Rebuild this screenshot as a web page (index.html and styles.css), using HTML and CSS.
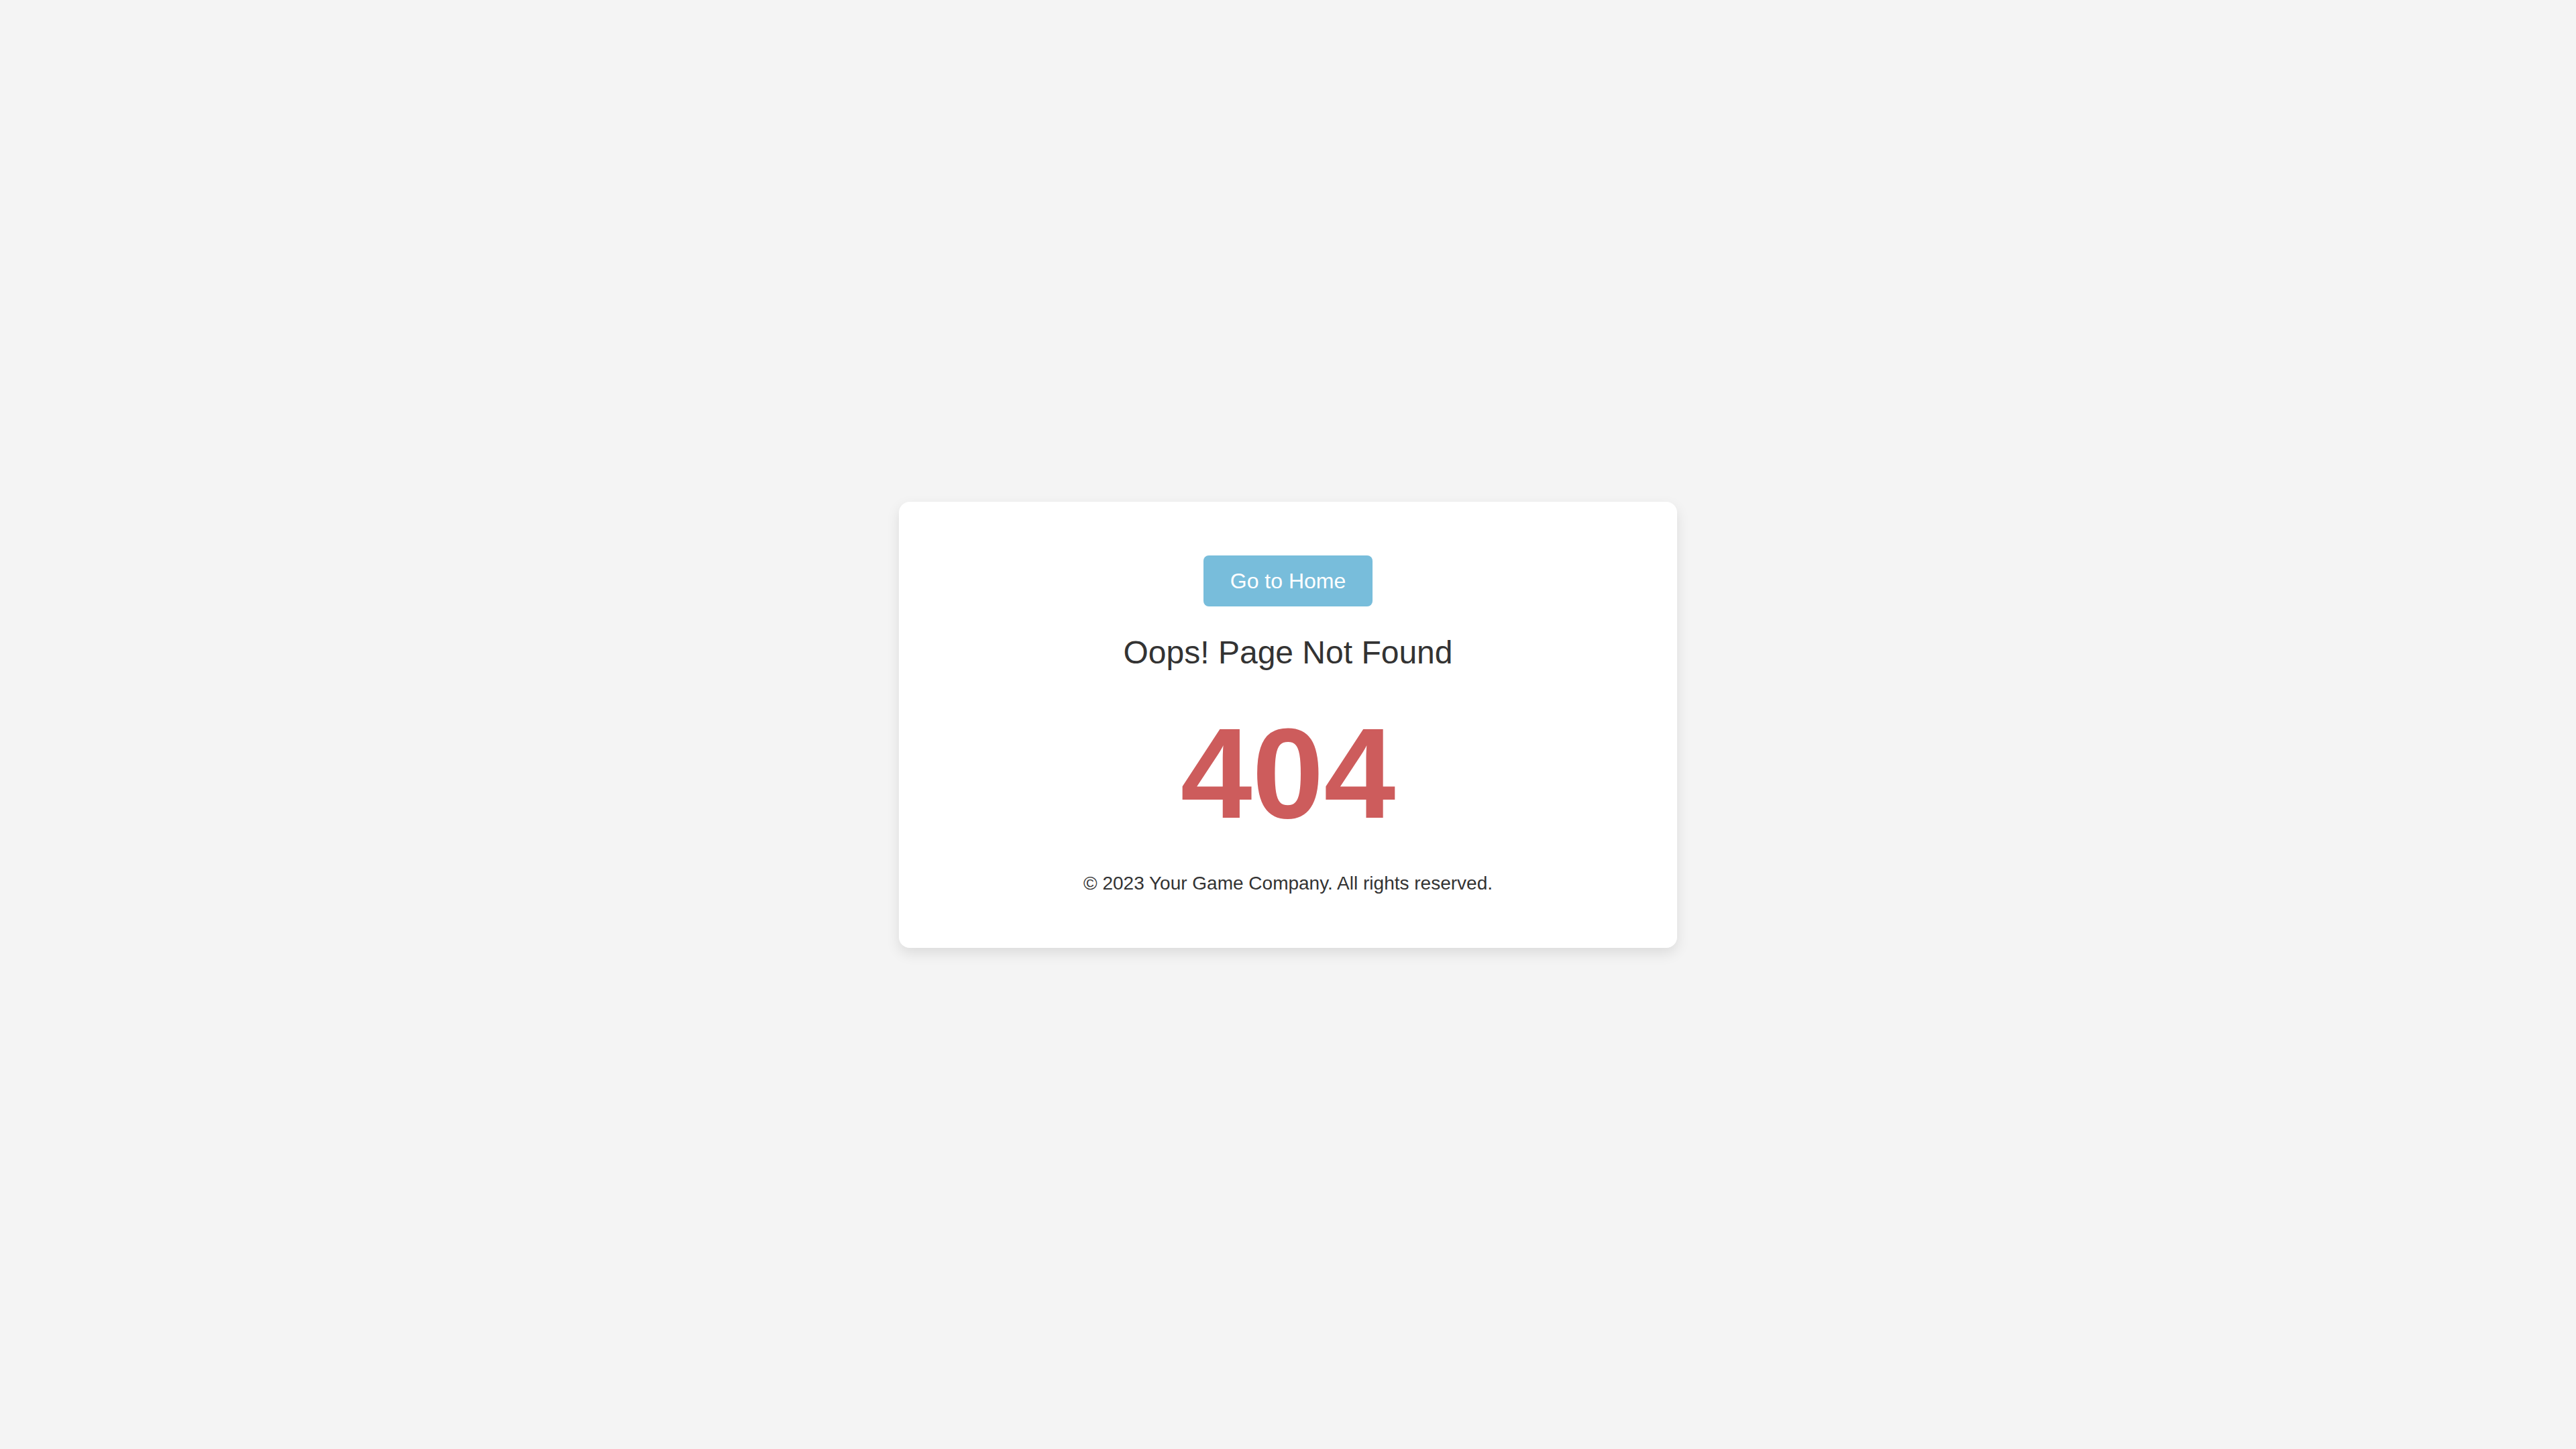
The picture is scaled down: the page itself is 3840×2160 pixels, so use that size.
FILE: index.html
```html
<!DOCTYPE html>
<html lang="en">
<head>
<meta charset="utf-8">
<title>404 - Page Not Found</title>
<link rel="stylesheet" href="styles.css">
</head>
<body>
  <main class="card">
    <a class="home-btn" href="#">Go to Home</a>
    <h1 class="title">Oops! Page Not Found</h1>
    <div class="code">404</div>
    <p class="footer">© 2023 Your Game Company. All rights reserved.</p>
  </main>
</body>
</html>
```

FILE: styles.css
```css
html, body {
  margin: 0;
  padding: 0;
}

body {
  background: #f4f4f4;
  font-family: "Liberation Sans", Arial, sans-serif;
  color: #333333;
  height: 100vh;
  display: flex;
  align-items: center;
  justify-content: center;
}

.card {
  box-sizing: border-box;
  width: 1160px;
  background: #ffffff;
  border-radius: 16px;
  box-shadow: 0 8px 20px rgba(0, 0, 0, 0.1);
  padding: 80px 40px;
  display: flex;
  flex-direction: column;
  align-items: center;
}

.home-btn {
  display: block;
  background: #78bddb;
  color: #ffffff;
  text-decoration: none;
  font-size: 32px;
  line-height: 36px;
  padding: 20px 40px;
  border-radius: 8px;
}

.title {
  margin: 41px 0 0;
  font-size: 48px;
  line-height: 56px;
  font-weight: normal;
  color: #333333;
}

.code {
  margin-top: 42px;
  font-size: 192px;
  line-height: 220px;
  font-weight: bold;
  color: #cd5c5c;
}

.footer {
  margin: 38px 0 0;
  font-size: 28px;
  line-height: 32px;
  color: #333333;
}
```
